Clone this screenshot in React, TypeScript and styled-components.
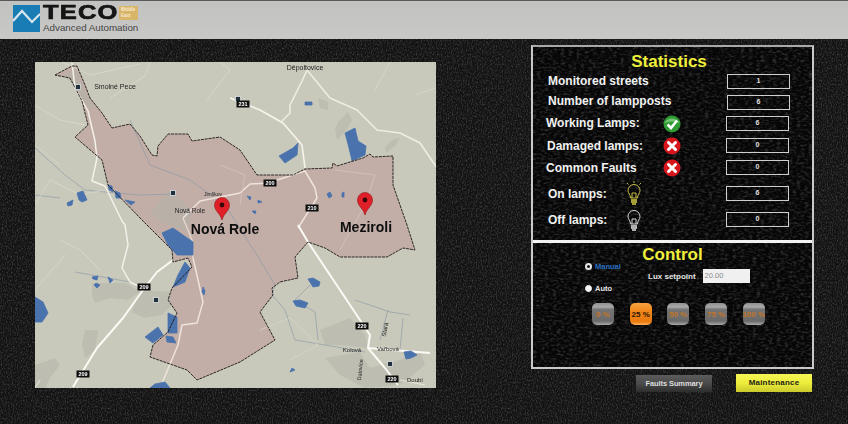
import React from "react";
import styled, { createGlobalStyle } from "styled-components";

const noise = (freq: string, grey: string, alpha: string, cut: string) =>
  `url("data:image/svg+xml,%3Csvg xmlns='http://www.w3.org/2000/svg' width='400' height='400'%3E%3Cfilter id='n'%3E%3CfeTurbulence type='fractalNoise' baseFrequency='${freq}' numOctaves='3' seed='4'/%3E%3CfeColorMatrix values='0 0 0 0 ${grey} 0 0 0 0 ${grey} 0 0 0 0 ${grey} 0 0 0 ${alpha} ${cut}'/%3E%3C/filter%3E%3Crect width='400' height='400' filter='url(%23n)'/%3E%3C/svg%3E")`;

const Global = createGlobalStyle`
  html, body { margin: 0; padding: 0; background: #151515; }
  body { font-family: "Liberation Sans", Arial, sans-serif; overflow: hidden; }
`;

const Page = styled.div`
  width: 848px;
  height: 424px;
  overflow: hidden;
  background-color: #121212;
  background-image: ${noise("0.8 0.5", "0.22", "0.9", "-0.38")};
  display: flex;
  flex-direction: column;
`;

const Header = styled.header`
  flex: none;
  display: flex;
  align-items: flex-start;
  padding: 5px 0 0 13px;
  height: 33px;
  border-top: 1px solid #5a5a5a;
  background: linear-gradient(#c2c2c0, #c8c8c6);
  gap: 3px;
`;

const LogoMark = styled.svg`
  width: 27px;
  height: 27px;
  flex: none;
  margin-top: -1px;
`;

const LogoText = styled.div`
  display: flex;
  flex-direction: column;
  margin-top: -3px;
`;

const LogoTop = styled.div`
  display: flex;
  align-items: flex-start;
  height: 19px;
`;

const Brand = styled.span`
  display: block;
  width: 76px;
  font-family: "Liberation Sans", sans-serif;
  font-weight: 700;
  font-size: 17px;
  line-height: 19px;
  color: #151515;
  letter-spacing: 0.8px;
  transform: scale(1.5, 1.15);
  transform-origin: left center;
  -webkit-text-stroke: 0.6px #151515;
  white-space: nowrap;
`;

const Badge = styled.span`
  display: block;
  width: 19px;
  height: 14px;
  margin-top: 3px;
  background: #d8b569;
  color: #f5ecd0;
  font-size: 4.5px;
  font-weight: 700;
  line-height: 6px;
  padding: 1px 0 0 2px;
  box-sizing: border-box;
  border-radius: 1px;
`;

const Tagline = styled.span`
  font-size: 9.8px;
  line-height: 11px;
  color: #454545;
  white-space: nowrap;
`;

const Main = styled.main`
  flex: 1;
  display: flex;
  align-items: flex-start;
  padding: 6px 0 0 35px;
`;

const MapBox = styled.svg`
  width: 401px;
  height: 326px;
  flex: none;
  margin-top: 17px;
  display: block;
  filter: blur(0.35px);
`;

const Side = styled.div`
  margin-left: 95px;
  width: 283px;
  display: flex;
  flex-direction: column;
  align-items: stretch;
`;

const Panel = styled.section`
  height: 324px;
  box-sizing: border-box;
  border: 2px solid #c9c9c9;
  border-top-color: #a9a9a9;
  background-color: #060606;
  background-image: ${noise("0.25 0.45", "0.2", "0.9", "-0.4")};
  display: flex;
  flex-direction: column;
`;

const StatsPart = styled.div`
  height: 196px;
  flex: none;
  box-sizing: border-box;
  border-bottom: 3px solid #f2f2f2;
  display: flex;
  flex-direction: column;
`;

const Title = styled.h2<{ $height: number; $shift?: number }>`
  margin: 0;
  height: ${(p) => p.$height}px;
  padding-right: ${(p) => p.$shift ?? 0}px;
  text-align: center;
  color: #f0f03c;
  font-size: 17px;
  line-height: ${(p) => p.$height}px;
  font-weight: 700;
`;

const Row = styled.div<{ $top: number; $indent: number }>`
  display: flex;
  align-items: center;
  height: 15px;
  margin-top: ${(p) => p.$top}px;
  padding-left: ${(p) => p.$indent}px;
`;

const Label = styled.span<{ $width: number; $lift?: number }>`
  width: ${(p) => p.$width}px;
  flex: none;
  color: #f1f1f1;
  font-size: 12px;
  font-weight: 700;
  white-space: nowrap;
  position: relative;
  top: ${(p) => -(p.$lift ?? 0)}px;
`;

const IconSlot = styled.span`
  width: 20px;
  height: 20px;
  flex: none;
  display: flex;
  align-items: center;
  justify-content: center;
`;

const Value = styled.div<{ $right: number }>`
  margin-left: auto;
  margin-right: ${(p) => p.$right}px;
  width: 63px;
  height: 15px;
  box-sizing: border-box;
  border: 1.5px solid #cfcfcf;
  color: #e0e0e0;
  font-size: 7px;
  font-weight: 700;
  line-height: 12px;
  text-align: center;
`;

const ControlPart = styled.div`
  flex: 1;
  display: flex;
  flex-direction: column;
`;

const ModeArea = styled.div`
  display: flex;
  height: 38px;
  margin-top: -5px;
  padding-left: 52px;
`;

const Modes = styled.div`
  width: 63px;
  flex: none;
  display: flex;
  flex-direction: column;
  gap: 14px;
`;

const Mode = styled.label<{ $active?: boolean }>`
  display: flex;
  align-items: center;
  gap: 3px;
  height: 8px;
  font-size: 7.5px;
  font-weight: 700;
  color: ${(p) => (p.$active ? "#2c6fc0" : "#e8e8e8")};
`;

const Radio = styled.span<{ $on?: boolean }>`
  width: 7px;
  height: 7px;
  border-radius: 50%;
  box-sizing: border-box;
  background: ${(p) => (p.$on ? "#141414" : "#f4f4f4")};
  border: ${(p) => (p.$on ? "2px solid #e8e8e8" : "1px solid #f4f4f4")};
`;

const Lux = styled.div`
  display: flex;
  align-items: center;
  height: 14px;
  margin-top: 7px;
  gap: 7px;
`;

const LuxLabel = styled.span`
  color: #e4e4e4;
  font-size: 8px;
  font-weight: 700;
  white-space: nowrap;
`;

const LuxInput = styled.div`
  width: 47px;
  height: 14px;
  box-sizing: border-box;
  background: #f0f0f0;
  color: #8a8a8a;
  font-size: 7.5px;
  line-height: 14px;
  padding-left: 2px;
`;

const Steps = styled.div`
  display: flex;
  gap: 15.7px;
  padding-left: 59px;
  margin-top: 3px;
`;

const Step = styled.div<{ $active?: boolean }>`
  width: 22px;
  height: 22px;
  border-radius: 5px;
  display: flex;
  align-items: center;
  justify-content: center;
  font-size: 8px;
  font-weight: 700;
  white-space: nowrap;
  color: ${(p) => (p.$active ? "#2a1604" : "#c07425")};
  background: ${(p) =>
    p.$active
      ? "linear-gradient(#f7a23e, #f08214 45%, #e87a10 85%, #ffb35a)"
      : "linear-gradient(#8f9090 0, #a8a8a8 18%, #747474 30%, #6a6a6a 82%, #a8a8a8 100%)"};
`;

const Actions = styled.div`
  display: flex;
  align-items: flex-start;
  padding-left: 105px;
  gap: 24px;
  margin-top: 5px;
`;

const ActionButton = styled.div<{ $primary?: boolean }>`
  width: 76px;
  height: ${(p) => (p.$primary ? 18 : 17)}px;
  margin-top: ${(p) => (p.$primary ? 0 : 1)}px;
  text-align: center;
  font-size: ${(p) => (p.$primary ? 8 : 7.5)}px;
  font-weight: 700;
  letter-spacing: ${(p) => (p.$primary ? 0.2 : -0.1)}px;
  line-height: ${(p) => (p.$primary ? 18 : 17)}px;
  color: ${(p) => (p.$primary ? "#1c1c10" : "#dcdcdc")};
  background: ${(p) =>
    p.$primary
      ? "linear-gradient(#f6f655, #ecec3c 50%, #c9c92c)"
      : "linear-gradient(#5c5c5c, #4a4a4a 50%, #2e2e2e)"};
`;

const Check = () => (
  <svg width="18" height="18" viewBox="0 0 18 18">
    <circle cx="9" cy="9" r="8.5" fill="#2f9a33" />
    <path d="M1.5 8 A8 7 0 0 1 16.5 8 Q9 5 1.5 8Z" fill="#74c574" />
    <path d="M4.5 9.5 L8 13 L14 5.5" fill="none" stroke="#fff" strokeWidth="2.6" />
  </svg>
);

const Cross = () => (
  <svg width="18" height="18" viewBox="0 0 18 18">
    <circle cx="9" cy="9" r="8.5" fill="#d8141c" />
    <path d="M5.5 5.5 L12.5 12.5 M12.5 5.5 L5.5 12.5" stroke="#fff" strokeWidth="3" strokeLinecap="round" />
  </svg>
);

const Bulb = ({ on }: { on?: boolean }) => {
  const c = on ? "#d8d048" : "#e6e6e6";
  return (
    <svg width="18" height="26" viewBox="0 0 18 26" fill="none" stroke={c} strokeWidth="0.9">
      <path d="M5.5 17 C5.5 13.5 3 12.5 3 9.5 A6 6 0 0 1 15 9.5 C15 12.5 12.5 13.5 12.5 17 Z" />
      <path d="M7 17 V12 H11 V17" />
      <path d="M6 19 H12 M6 21 H12 M7 23 H11" strokeWidth="1.3" />
      {on && <path d="M9 0 V2 M2 2 L3.5 3.5 M16 2 L14.5 3.5" />}
    </svg>
  );
};

const area =
  "M55 75 L72 66 L77 66 L85 85 L90 98 L102 113 L112 128 L130 124 L140 136 L152 155 L157 156 L158 146 L168 134 L188 134 L192 141 L220 137 L240 150 L257 175 L293 175 L305 169 L332 168 L333 163 L337 166 L363 158 L370 154 L373 157 L393 156 L393 185 L400 205 L407 225 L415 250 L403 248 L387 257 L363 257 L340 257 L325 248 L308 242 L295 257 L298 278 L280 282 L272 288 L273 295 L260 312 L275 340 L240 362 L197 380 L187 370 L150 357 L153 345 L168 332 L177 313 L168 300 L172 288 L192 267 L188 258 L173 262 L172 250 L147 225 L143 221 L108 185 L102 160 L75 137 L88 125 L82 101 L70 78 Z";

const waters = [
  "M345 133 L355 128 L358 141 L366 146 L365 155 L352 161 L349 148Z",
  "M279 156 L293 148 L298 143 L297 155 L285 163Z",
  "M305 102 L312 102 L312 105 L305 105Z",
  "M77 193 L83 191 L87 200 L82 202 L79 200Z",
  "M67 203 L73 200 L72 205 L68 206Z",
  "M162 233 L173 228 L193 242 L193 255 L177 255 L168 245Z",
  "M185 262 L190 268 L185 282 L173 287 L178 275Z",
  "M145 337 L158 327 L163 335 L153 343Z",
  "M168 313 L177 317 L177 333 L168 333Z",
  "M166 336 L173 337 L176 343 L167 342Z",
  "M35 297 L43 302 L48 313 L42 322 L35 322Z",
  "M92 277 L98 276 L97 280 L93 279Z M96 283 L100 285 L97 288 L94 285Z M108 277 L113 280 L110 283Z",
  "M308 279 L313 278 L320 282 L319 286 L313 287Z",
  "M293 301 L300 300 L308 303 L305 308 L296 306Z",
  "M108 185 L112 186 L113 192 L109 190Z M115 191 L120 193 L121 198 L116 198Z M125 200 L135 202 L131 205Z",
  "M404 352 L411 351 L417 355 L411 358 L406 359Z",
  "M203 287 L205 291 L204 295 L202 292Z",
  "M292 368 L295 370 L290 372Z",
  "M155 384 L165 382 L170 388 L150 388Z",
  "M327 194 L330 192 L332 196 L329 198Z M342 193 L344 192 L344 197 L342 197Z",
  "M247 196 L251 197 L250 200Z M258 200 L262 202 L258 203Z M252 211 L256 211 L255 214Z",
];

const urban = [
  "M92 283 L125 283 L140 292 L128 300 L110 298 L95 303 L92 295Z",
  "M140 290 L170 292 L172 305 L162 315 L145 318 L132 312Z",
  "M85 330 L98 330 L95 350 L85 358 L82 345Z",
  "M35 365 L55 358 L60 365 L50 378 L45 388 L35 388Z",
  "M320 330 L350 318 L365 335 L368 348 L340 345 L325 345Z",
  "M325 358 L360 352 L370 368 L400 360 L420 350 L425 365 L400 385 L365 388 L340 375Z",
  "M338 122 L348 112 L352 120 L345 132 L337 140 L335 130Z",
  "M318 98 L328 102 L328 110 L320 108Z",
  "M385 148 L392 140 L400 138 L395 146 L386 153Z",
  "M62 75 L77 68 L84 88 L95 108 L88 108 L74 85Z",
  "M170 190 L192 210 L188 232 L160 222 L150 212Z",
];

const roads: [string, number, string][] = [
  ["M72 63 L75 88 L88 111 L95 141 L97 158 L92 181 L105 186 L122 221 L125 225 L128 245 L122 268 L130 282 L140 287", 1.5, "#f4f1ea"],
  ["M173 260 L157 272 L143 290 L123 318 L97 348 L73 387", 2, "#fbfaf5"],
  ["M183 218 L200 201 L240 193 L250 184 L268 183 L305 171 L315 188 L317 198 L298 228", 1.5, "#eee3dc"],
  ["M298 225 L308 242 L360 320 L370 335 L368 348 L430 353", 2, "#fbfaf5"],
  ["M368 348 L385 368 L398 385", 2, "#fbfaf5"],
  ["M230 98 L260 110 L283 123 L302 145 L305 168", 1.6, "#f6f4ec"],
  ["M282 121 L290 113 L290 105 L302 81 L307 70 L330 98 L357 110 L377 130 L400 133 L420 143 L437 168", 1.6, "#eeede5"],
  ["M193 258 L203 302 L197 323 L182 325 L178 345 L160 388", 1.5, "#eee3dc"],
  ["M183 218 L192 240 L193 258", 1.2, "#e8dbd4"],
  ["M35 388 L40 380 M425 385 L400 380", 1, "#e7e6dc"],
  ["M220 62 L230 70 L207 100", 0.8, "#d9d9cc"],
  ["M390 62 L375 90 M415 95 L435 88", 0.8, "#d9d9cc"],
  ["M35 145 L60 165 M35 105 L60 120 L85 125", 0.8, "#d8d8cb"],
  ["M35 205 L50 180 L80 195 L105 190", 0.8, "#d8d8cb"],
  ["M60 240 L80 250 L100 270 M35 290 L65 255", 0.8, "#d8d8cb"],
  ["M62 62 L90 75 L140 64 M150 62 L145 76 L110 98", 0.8, "#d8d8cb"],
  ["M220 165 L245 175 L240 205", 0.7, "#d7c7c0"],
  ["M335 170 L375 175 L365 205 L352 228 L340 250", 0.7, "#d7c7c0"],
  ["M260 330 L290 318 L318 345 L290 360", 0.7, "#d8d8c8"],
];

const rivers = [
  "M35 148 L65 175 L85 190 L105 192 L140 195 L175 194",
  "M130 120 L150 165 L190 180 L225 205 L260 260 L275 285 L272 295 L285 310 L295 340 L325 345 L365 352",
  "M35 195 L60 198 M75 272 L130 282 M310 285 L295 300 L315 312 L318 340",
  "M355 300 L390 312 L410 315 M388 310 L380 340 M403 318 L400 350",
];

const shields: [number, number, string][] = [
  [243, 104, "231"], [270, 183, "200"], [312, 208, "210"], [144, 287, "209"],
  [83, 374, "209"], [362, 326, "220"], [392, 379, "220"],
];

const places: [number, number, string, number][] = [
  [115, 87, "Smolné Pece", 7], [190, 211, "Nová Role", 6.5], [305, 68, "Děpoltovice", 7],
  [213, 194, "Jimlíkov", 5], [352, 350, "Kolová", 6], [388, 349, "Vařbová", 6], [415, 380, "Doubí", 6],
];

const Pin = ({ x, y }: { x: number; y: number }) => (
  <g>
    <path d={`M${x} ${y} C${x - 2} ${y - 7} ${x - 7.5} ${y - 9} ${x - 7.5} ${y - 15} A7.5 7.5 0 0 1 ${x + 7.5} ${y - 15} C${x + 7.5} ${y - 9} ${x + 2} ${y - 7} ${x} ${y}Z`} fill="#e02028" stroke="#8e1518" strokeWidth="0.6" />
    <circle cx={x} cy={y - 15} r="2.4" fill="#3a0808" />
  </g>
);

const MapDrawing = () => (
  <MapBox viewBox="35 62 401 326" role="img" aria-label="Map">
    <rect x="35" y="62" width="401" height="326" fill="#c9c9bb" />
    <path d={area} fill="#c2aea7" />
    {urban.map((d, i) => <path key={i} d={d} fill="#b2b2aa" opacity="0.55" />)}
    {rivers.map((d, i) => <path key={i} d={d} fill="none" stroke="#8a97a6" strokeWidth="0.8" opacity="0.8" />)}
    {roads.map(([d, w, c], i) => <path key={i} d={d} fill="none" stroke={c} strokeWidth={w} strokeLinejoin="round" />)}
    {waters.map((d, i) => <path key={i} d={d} fill="#4a72ac" stroke="#4a72ac" strokeWidth="0.8" strokeLinejoin="round" />)}
    <path d={area} fill="none" stroke="#1c1616" strokeWidth="0.9" strokeDasharray="3 0.8" />
    {[[78, 87], [173, 193], [156, 300], [390, 364], [238, 99]].map(([x, y], i) => (
      <rect key={i} x={x - 2.5} y={y - 2.5} width="5" height="5" fill="#20303c" stroke="#dfe3e3" strokeWidth="0.8" />
    ))}
    {shields.map(([x, y, t], i) => (
      <g key={i}>
        <rect x={x - 6.5} y={y - 3.5} width="13" height="7" fill="#0c0c0c" />
        <text x={x} y={y + 2} textAnchor="middle" fontSize="5.5" fontWeight="700" fill="#fff" fontFamily="Liberation Sans">{t}</text>
      </g>
    ))}
    {places.map(([x, y, t, s], i) => (
      <text key={i} x={x} y={y + 2} textAnchor="middle" fontSize={s} fill="#222" fontFamily="Liberation Sans">{t}</text>
    ))}
    <text x="387" y="330" textAnchor="middle" fontSize="6" fill="#222" fontFamily="Liberation Sans" transform="rotate(-80 387 330)">Stará</text>
    <text x="362" y="370" textAnchor="middle" fontSize="5.5" fill="#222" fontFamily="Liberation Sans" transform="rotate(-85 362 370)">Dalovice</text>
    <Pin x={222} y={220} />
    <Pin x={365} y={215} />
    <text x="225" y="234" textAnchor="middle" fontSize="14" fontWeight="700" fill="#0d0d0d" fontFamily="Liberation Sans">Nová Role</text>
    <text x="366" y="232" textAnchor="middle" fontSize="14" fontWeight="700" fill="#0d0d0d" fontFamily="Liberation Sans">Meziroli</text>
  </MapBox>
);

const stats = [
  { top: -2, indent: 15, label: "Monitored streets", value: "1", right: 22, w: 0, lift: 1 },
  { top: 6, indent: 15, label: "Number of lampposts", value: "6", right: 22, w: 0, lift: 2 },
  { top: 6, indent: 13, label: "Working Lamps:", value: "6", right: 23, w: 116, icon: <Check />, lift: 1 },
  { top: 7, indent: 14, label: "Damaged lamps:", value: "0", right: 23, w: 115, icon: <Cross /> },
  { top: 7, indent: 13, label: "Common Faults", value: "0", right: 23, w: 116, icon: <Cross /> },
  { top: 11, indent: 15, label: "On lamps:", value: "6", right: 23, w: 76, icon: <Bulb on /> },
  { top: 11, indent: 15, label: "Off lamps:", value: "0", right: 23, w: 76, icon: <Bulb /> },
];

const levels = ["0 %", "25 %", "50 %", "75 %", "100 %"];

export default function App() {
  return (
    <Page>
      <Global />
      <Header>
        <LogoMark viewBox="0 0 27 27">
          <rect width="27" height="27" fill="#1a7cb4" />
          <path d="M0 16 L9 6 L19 17 L27 9" fill="none" stroke="#d7e6ee" strokeWidth="2.2" />
        </LogoMark>
        <LogoText>
          <LogoTop>
            <Brand>TECO</Brand>
            <Badge>Middle<br />East</Badge>
          </LogoTop>
          <Tagline>Advanced Automation</Tagline>
        </LogoText>
      </Header>
      <Main>
        <MapDrawing />
        <Side>
          <Panel>
            <StatsPart>
              <Title $height={29} $shift={7}>Statistics</Title>
              {stats.map((s) => (
                <Row key={s.label} $top={s.top} $indent={s.indent}>
                  <Label $width={s.w || 150} $lift={s.lift}>{s.label}</Label>
                  {s.icon && <IconSlot>{s.icon}</IconSlot>}
                  <Value $right={s.right}>{s.value}</Value>
                </Row>
              ))}
            </StatsPart>
            <ControlPart>
              <Title $height={24}>Control</Title>
              <ModeArea>
                <Modes>
                  <Mode $active><Radio $on />Manual</Mode>
                  <Mode><Radio />Auto</Mode>
                </Modes>
                <Lux>
                  <LuxLabel>Lux setpoint</LuxLabel>
                  <LuxInput>20.00</LuxInput>
                </Lux>
              </ModeArea>
              <Steps>
                {levels.map((l, i) => (
                  <Step key={l} $active={i === 1}>{l}</Step>
                ))}
              </Steps>
            </ControlPart>
          </Panel>
          <Actions>
            <ActionButton>Faults Summary</ActionButton>
            <ActionButton $primary>Maintenance</ActionButton>
          </Actions>
        </Side>
      </Main>
    </Page>
  );
}
